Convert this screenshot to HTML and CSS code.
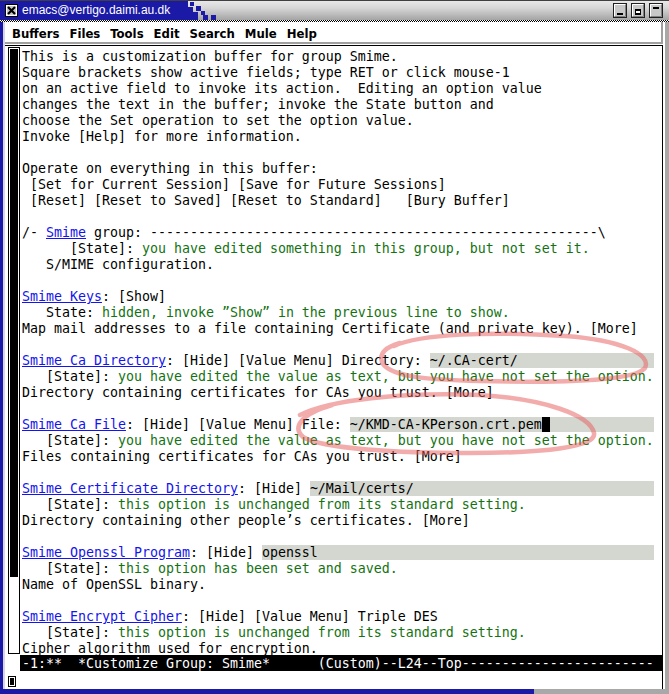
FILE: index.html
```html
<!DOCTYPE html>
<html>
<head>
<meta charset="utf-8">
<title>emacs@vertigo.daimi.au.dk</title>
<link rel="stylesheet" href="styles.css">
</head>
<body>
<div class="window">
  <div class="titlebar">
    <div class="title-blue">
      <svg class="title-icon" width="13" height="13" viewBox="0 0 13 13">
        <rect x="0.5" y="0.5" width="12" height="12" fill="#c8c8c8" stroke="#000"/>
        <rect x="1.5" y="1.5" width="10" height="10" fill="none" stroke="#fff"/>
        <path d="M3 3 L10 10 M10 3 L3 10" stroke="#000" stroke-width="2.2"/>
      </svg>
      <span class="title-text">emacs@vertigo.daimi.au.dk</span>
    </div>
    <svg class="title-blocks" width="40" height="19" viewBox="0 0 40 19">
      <rect x="0" y="0" width="4" height="19" fill="#1a1aa6"/>
      <rect x="4" y="6" width="5" height="13" fill="#1a1aa6"/>
      <rect x="9" y="11" width="5" height="8" fill="#1a1aa6"/>
      <rect x="6" y="1" width="4" height="4" fill="#1a1aa6"/>
      <rect x="12" y="5" width="5" height="5" fill="#1a1aa6"/>
      <rect x="17" y="10" width="4" height="4" fill="#1a1aa6"/>
      <rect x="19" y="14" width="5" height="5" fill="#1a1aa6"/>
      <rect x="27" y="14" width="5" height="5" fill="#1a1aa6"/>
    </svg>
    <div class="title-fill"></div>
    <div class="title-buttons">
      <svg class="tbtn" width="14" height="15" viewBox="0 0 14 15">
        <rect x="0.5" y="0.5" width="13" height="14" fill="#c8c8c8" stroke="#202020"/>
        <path d="M1.5 13.5 V1.5 H12.5" fill="none" stroke="#fff"/>
        <path d="M1.5 13.5 H12.5 V1.5" fill="none" stroke="#808080"/>
        <rect x="4" y="10" width="6" height="2" fill="#000"/>
      </svg>
      <svg class="tbtn" width="14" height="15" viewBox="0 0 14 15">
        <rect x="0.5" y="0.5" width="13" height="14" fill="#c8c8c8" stroke="#202020"/>
        <path d="M1.5 13.5 V1.5 H12.5" fill="none" stroke="#fff"/>
        <path d="M1.5 13.5 H12.5 V1.5" fill="none" stroke="#808080"/>
        <rect x="4" y="6" width="6" height="6" fill="#000"/>
        <rect x="5" y="8" width="4" height="2" fill="#fff"/>
      </svg>
      <svg class="tbtn" width="14" height="15" viewBox="0 0 14 15">
        <rect x="0.5" y="0.5" width="13" height="14" fill="#c8c8c8" stroke="#202020"/>
        <path d="M1.5 13.5 V1.5 H12.5" fill="none" stroke="#fff"/>
        <path d="M1.5 13.5 H12.5 V1.5" fill="none" stroke="#808080"/>
        <rect x="4" y="4" width="6" height="2" fill="#000"/>
      </svg>
    </div>
  </div>
  <div class="dither"></div>
  <div class="frame">
    <div class="inner">
      <div class="menubar">
        <span>Buffers</span><span>Files</span><span>Tools</span><span>Edit</span><span>Search</span><span>Mule</span><span>Help</span>
      </div>
      <div class="emacs">
        <div class="scrollbar"><div class="thumb"></div></div>
        <div class="buffer">
          <div class="ln">This is a customization buffer for group Smime.</div>
          <div class="ln">Square brackets show active fields; type RET or click mouse-1</div>
          <div class="ln">on an active field to invoke its action.  Editing an option value</div>
          <div class="ln">changes the text in the buffer; invoke the State button and</div>
          <div class="ln">choose the Set operation to set the option value.</div>
          <div class="ln">Invoke [Help] for more information.</div>
          <div class="ln"> </div>
          <div class="ln">Operate on everything in this buffer:</div>
          <div class="ln"> [Set for Current Session] [Save for Future Sessions]</div>
          <div class="ln"> [Reset] [Reset to Saved] [Reset to Standard]   [Bury Buffer]</div>
          <div class="ln"> </div>
          <div class="ln">/- <span class="lnk">Smime</span> group: --------------------------------------------------------\</div>
          <div class="ln">      [State]: <span class="g">you have edited something in this group, but not set it.</span></div>
          <div class="ln">   S/MIME configuration.</div>
          <div class="ln"> </div>
          <div class="ln"><span class="lnk">Smime Keys</span>: [Show]</div>
          <div class="ln">   State: <span class="g">hidden, invoke ”Show” in the previous line to show.</span></div>
          <div class="ln">Map mail addresses to a file containing Certificate (and private key). [More]</div>
          <div class="ln"> </div>
          <div class="ln"><span class="lnk">Smime Ca Directory</span>: [Hide] [Value Menu] Directory: <span class="fld">~/.CA-cert/                 </span></div>
          <div class="ln">   [State]: <span class="g">you have edited the value as text, but you have not set the option.</span></div>
          <div class="ln">Directory containing certificates for CAs you trust. [More]</div>
          <div class="ln"> </div>
          <div class="ln"><span class="lnk">Smime Ca File</span>: [Hide] [Value Menu] File: <span class="fld">~/KMD-CA-KPerson.crt.pem<span class="cur"> </span>             </span></div>
          <div class="ln">   [State]: <span class="g">you have edited the value as text, but you have not set the option.</span></div>
          <div class="ln">Files containing certificates for CAs you trust. [More]</div>
          <div class="ln"> </div>
          <div class="ln"><span class="lnk">Smime Certificate Directory</span>: [Hide] <span class="fld">~/Mail/certs/                              </span></div>
          <div class="ln">   [State]: <span class="g">this option is unchanged from its standard setting.</span></div>
          <div class="ln">Directory containing other people’s certificates. [More]</div>
          <div class="ln"> </div>
          <div class="ln"><span class="lnk">Smime Openssl Program</span>: [Hide] <span class="fld">openssl                                          </span></div>
          <div class="ln">   [State]: <span class="g">this option has been set and saved.</span></div>
          <div class="ln">Name of OpenSSL binary.</div>
          <div class="ln"> </div>
          <div class="ln"><span class="lnk">Smime Encrypt Cipher</span>: [Hide] [Value Menu] Triple DES</div>
          <div class="ln">   [State]: <span class="g">this option is unchanged from its standard setting.</span></div>
          <div class="ln">Cipher algorithm used for encryption.</div>
        </div>
        <div class="modeline">-1:**  *Customize Group: Smime*      (Custom)--L24--Top------------------------</div>
        <div class="minibuf"><div class="mcursor"></div></div>
      </div>
    </div>
  </div>
  <svg class="annot" width="669" height="694" viewBox="0 0 669 694">
    <path d="M394 346 C 420 334, 490 331, 565 336 C 620 340, 652 354, 645 368 C 634 381, 560 383, 480 381 C 425 380, 388 376, 382 362 C 379 353, 386 347, 400 343" />
    <path d="M300 415 C 330 400, 400 392, 480 395 C 545 399, 590 415, 594 433 C 597 447, 545 453, 470 453 C 400 453, 322 449, 303 437 C 292 427, 301 414, 332 405" />
  </svg>
</div>
</body>
</html>
```
FILE: styles.css
```css
* { box-sizing: border-box; }
html, body { margin: 0; padding: 0; }
body {
  width: 669px;
  height: 694px;
  overflow: hidden;
  background: #a8a8a8;
  font-family: "DejaVu Sans Mono", monospace;
}
.window {
  position: relative;
  width: 669px;
  height: 694px;
  display: flex;
  flex-direction: column;
}

/* title bar */
.titlebar {
  height: 20px;
  display: flex;
  background: linear-gradient(#e8e8e8, #d8d8d8 35%, #a4a4a4);
  border-top: 1px solid #404040;
}
.title-blue {
  width: 184px;
  height: 19px;
  background: #1a1aa6;
  display: flex;
  align-items: center;
  padding-left: 5px;
}
.title-icon { display: block; flex: none; }
.title-text {
  margin-left: 4px;
  color: #fff;
  font-family: "Liberation Sans", Arial, sans-serif;
  font-size: 12px;
  line-height: 19px;
  white-space: nowrap;
}
.title-blocks { display: block; flex: none; }
.title-fill { flex: 1; }
.title-buttons {
  display: flex;
  gap: 4px;
  padding: 2px 6px 0 0;
}
.tbtn { display: block; }

.dither {
  height: 2px;
  background: repeating-conic-gradient(#000 0 25%, #fff 0 50%) 0 0 / 2px 2px;
}

/* frame */
.frame {
  flex: 1;
  display: flex;
  background: linear-gradient(to right, #1a1aa6 0 534px, #a8a8a8 534px);
  padding: 0 4px 5px 3px;
}
.inner {
  flex: 1;
  display: flex;
  flex-direction: column;
  background: #fff;
  border-left: 2px solid #d4d4e4;
  padding-right: 2px;
}
.menubar {
  height: 22px;
  flex: none;
  display: flex;
  align-items: flex-start;
  gap: 10px;
  padding: 4px 0 0 7px;
  border-bottom: 2px solid #a0a0a0;
  border-right: 2px solid #a0a0a0;
  font-family: "DejaVu Sans Condensed", "DejaVu Sans", sans-serif;
  font-weight: bold;
  font-size: 13px;
  line-height: 15px;
  color: #000;
}

.emacs {
  flex: 1;
  margin-top: 1px;
  border-top: 1px solid #000;
  border-right: 1px solid #000;
  display: grid;
  grid-template-columns: 15px 1fr;
  grid-template-rows: 609px 16px 18px;
}
.scrollbar {
  margin: 1px 0 0 3px;
  width: 12px;
  height: 607px;
  border: 1px solid #000;
  padding: 1px;
  background: #fff;
}
.thumb {
  height: 528px;
  background: #000;
}
.buffer {
  padding-left: 2px;
  font-size: 13.29px;
  color: #000;
}
.ln {
  height: 16px;
  line-height: 21px;
  white-space: pre;
}
.g { color: #137313; }
.lnk { color: #1414ee; text-decoration: underline; }
.fld { background: #d4d7d0; }
.cur { background: #000; }

.modeline {
  grid-column: 2;
  background: #000;
  color: #fff;
  padding-left: 2px;
  font-size: 13.29px;
  line-height: 17px;
  white-space: pre;
  overflow: hidden;
}
.minibuf { grid-column: 1 / 3; }
.mcursor {
  margin: 5px 0 0 3px;
  width: 8px;
  height: 11px;
  background: #000;
  box-shadow: inset 0 0 0 1px #000, inset 0 0 0 2px #fff;
}

/* hand-drawn annotation */
.annot {
  position: absolute;
  left: 0;
  top: 0;
  pointer-events: none;
}
.annot path {
  fill: none;
  stroke: rgba(232, 90, 90, 0.5);
  stroke-width: 4.5;
  stroke-linecap: round;
  stroke-linejoin: round;
}
```
